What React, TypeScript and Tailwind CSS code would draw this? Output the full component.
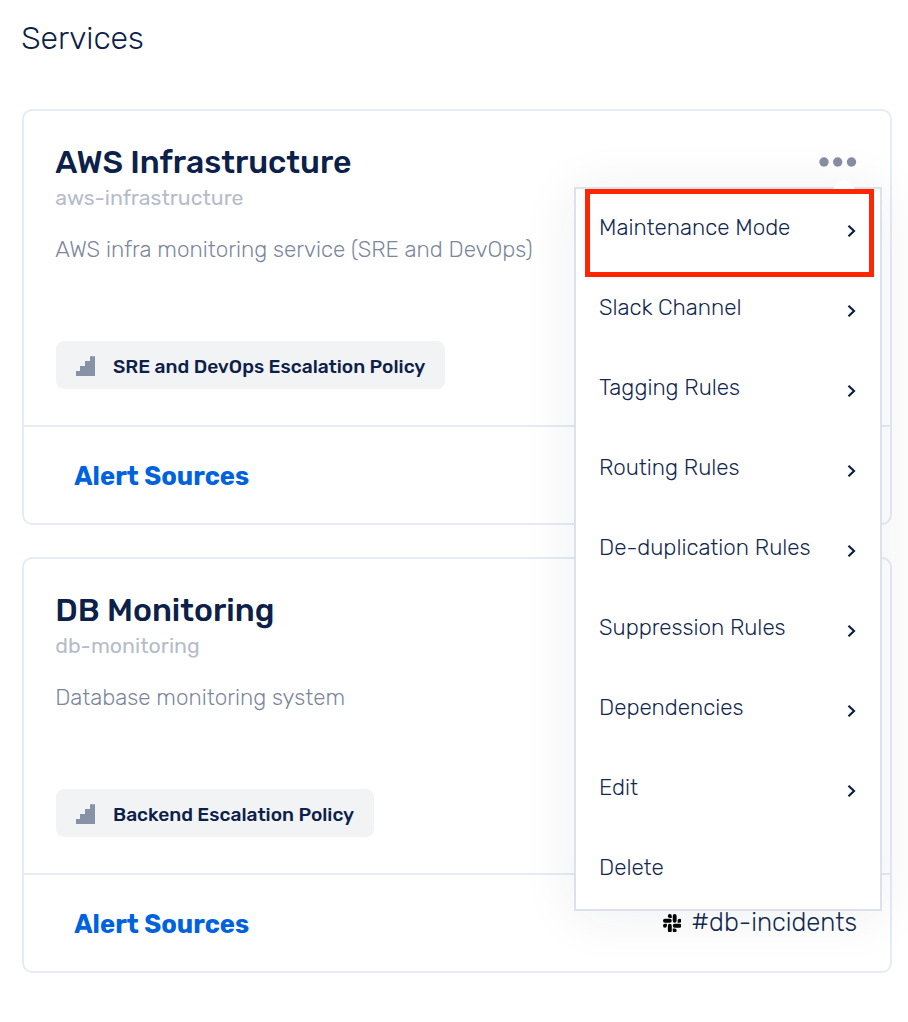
type Service = {
  name: string;
  slug: string;
  description: string;
  policy: string;
  channel?: string;
  menuOpen?: boolean;
};

const services: Service[] = [
  {
    name: "AWS Infrastructure",
    slug: "aws-infrastructure",
    description: "AWS infra monitoring service (SRE and DevOps)",
    policy: "SRE and DevOps Escalation Policy",
    menuOpen: true,
  },
  {
    name: "DB Monitoring",
    slug: "db-monitoring",
    description: "Database monitoring system",
    policy: "Backend Escalation Policy",
    channel: "#db-incidents",
  },
];

const menuItems = [
  { label: "Maintenance Mode", arrow: true },
  { label: "Slack Channel", arrow: true },
  { label: "Tagging Rules", arrow: true },
  { label: "Routing Rules", arrow: true },
  { label: "De-duplication Rules", arrow: true },
  { label: "Suppression Rules", arrow: true },
  { label: "Dependencies", arrow: true },
  { label: "Edit", arrow: true },
  { label: "Delete", arrow: false },
];

function StairsIcon() {
  return (
    <svg className="mt-[2px]" width="20" height="20" viewBox="0 0 20 20" fill="#8892a6">
      <path d="M14 0.300h5V20H-0.300v-5H4v-5h5V5h5z" />
    </svg>
  );
}

function SlackIcon() {
  return (
    <svg width="18.500" height="18.500" viewBox="0 0 24 24" fill="#000">
      <path d="M5.042 15.165a2.528 2.528 0 0 1-2.52 2.523A2.528 2.528 0 0 1 0 15.165a2.527 2.527 0 0 1 2.522-2.52h2.52v2.52zM6.313 15.165a2.527 2.527 0 0 1 2.521-2.52 2.527 2.527 0 0 1 2.521 2.52v6.313A2.528 2.528 0 0 1 8.834 24a2.528 2.528 0 0 1-2.521-2.522v-6.313zM8.834 5.042a2.528 2.528 0 0 1-2.521-2.52A2.528 2.528 0 0 1 8.834 0a2.528 2.528 0 0 1 2.521 2.522v2.52H8.834zM8.834 6.313a2.528 2.528 0 0 1 2.521 2.521 2.528 2.528 0 0 1-2.521 2.521H2.522A2.528 2.528 0 0 1 0 8.834a2.528 2.528 0 0 1 2.522-2.521h6.312zM18.956 8.834a2.528 2.528 0 0 1 2.522-2.521A2.528 2.528 0 0 1 24 8.834a2.528 2.528 0 0 1-2.522 2.521h-2.522V8.834zM17.688 8.834a2.528 2.528 0 0 1-2.523 2.521 2.527 2.527 0 0 1-2.52-2.521V2.522A2.527 2.527 0 0 1 15.165 0a2.528 2.528 0 0 1 2.523 2.522v6.312zM15.165 18.956a2.528 2.528 0 0 1 2.523 2.522A2.528 2.528 0 0 1 15.165 24a2.527 2.527 0 0 1-2.52-2.522v-2.522h2.52zM15.165 17.688a2.527 2.527 0 0 1-2.52-2.523 2.526 2.526 0 0 1 2.52-2.52h6.313A2.527 2.527 0 0 1 24 15.165a2.528 2.528 0 0 1-2.522 2.523h-6.313z" />
    </svg>
  );
}

function ServiceMenu() {
  return (
    <div className="absolute top-[76px] right-[8px] z-10 w-[308px] border-2 border-[#dde2ea] bg-white shadow-[0_4px_52px_rgba(18,38,63,0.075)]">
      <svg
        className="absolute -top-[10px] right-[24px]"
        width="24"
        height="12"
        viewBox="0 0 24 12"
        fill="#fff"
      >
        <path d="M0 11L9.500 1.500Q12 -0.500 14.500 1.500L24 11V12H0z" />
      </svg>
      <ul className="relative">
        {menuItems.map((item) => (
          <li
            key={item.label}
            className="flex h-20 items-start justify-between pt-[25px] pr-[24px] pl-[23px] text-[22.4px] leading-[28px] font-light text-[#132850]"
          >
            <span className="whitespace-nowrap">{item.label}</span>
            {item.arrow && (
              <svg
                className="mt-[10px]"
                width="9"
                height="14"
                viewBox="0 0 9 14"
                fill="none"
                stroke="#0c2149"
                strokeWidth="2.2"
              >
                <path d="M1.500 1.700L7 7L1.500 12.300" />
              </svg>
            )}
          </li>
        ))}
      </ul>
      <div className="absolute top-0 left-[9px] h-[88px] w-[289px] border-[5px] border-[#ff2600]" />
    </div>
  );
}

function ServiceCard({ service }: { service: Service }) {
  return (
    <section className="relative h-[416px] rounded-[10px] border-2 border-[#e6ebf5]">
      <div className="flex h-[314px] flex-col items-start px-8 pt-8">
        <div className="flex w-full items-start justify-between">
          <h2 className="-ml-[0.8px] text-[32px] leading-[38px] font-medium text-[#0c2149]">{service.name}</h2>
          {service.menuOpen && (
            <svg className="mt-[14px] mr-[1px]" width="38" height="10" viewBox="0 0 38 10" fill="#868fa4">
              <circle cx="5" cy="5" r="4.700" />
              <circle cx="18.700" cy="5" r="4.700" />
              <circle cx="32.500" cy="5" r="4.700" />
            </svg>
          )}
        </div>
        <p className="mt-[5px] -ml-[0.8px] text-[21.33px] leading-6 text-[#b6bcc8]">{service.slug}</p>
        <p className="mt-[26px] -ml-[0.8px] text-[22.4px] leading-7 font-light text-[#7d879c]">
          {service.description}
        </p>
        <div className="mt-[77px] flex h-12 items-center rounded-lg bg-[#f2f3f5] pr-[19.500px] pl-5">
          <StairsIcon />
          <span className="mt-[3px] ml-[17px] text-[19.2px] leading-6 font-medium whitespace-nowrap text-[#0c2149]">
            {service.policy}
          </span>
        </div>
      </div>
      <div className="flex h-[98px] items-center justify-between border-t-2 border-[#e6ebf5] pr-[33px] pl-[50.300px]">
        <a className="pt-[2px] text-[25.6px] leading-8 font-bold text-[#0062dd]">Alert Sources</a>
        {service.channel && (
          <div className="flex items-center gap-[10px] text-[25.6px] leading-8 font-light text-[#132850]">
            <SlackIcon />
            <span className="-mt-[2px]">{service.channel}</span>
          </div>
        )}
      </div>
      {service.menuOpen && <ServiceMenu />}
    </section>
  );
}

export default function App() {
  return (
    <main className="h-[1022px] w-[908px] overflow-hidden bg-white pt-[19px] pr-4 pl-[22px] font-['Rubik',Roboto,sans-serif]">
      <h1 className="-ml-[0.8px] text-[32px] leading-[38px] font-light text-[#0c2149]">Services</h1>
      <div className="mt-[52px] flex flex-col gap-8">
        {services.map((service, index) => (
          <div key={service.slug} className={index === 0 ? "relative z-10" : ""}>
            <ServiceCard service={service} />
          </div>
        ))}
      </div>
    </main>
  );
}
